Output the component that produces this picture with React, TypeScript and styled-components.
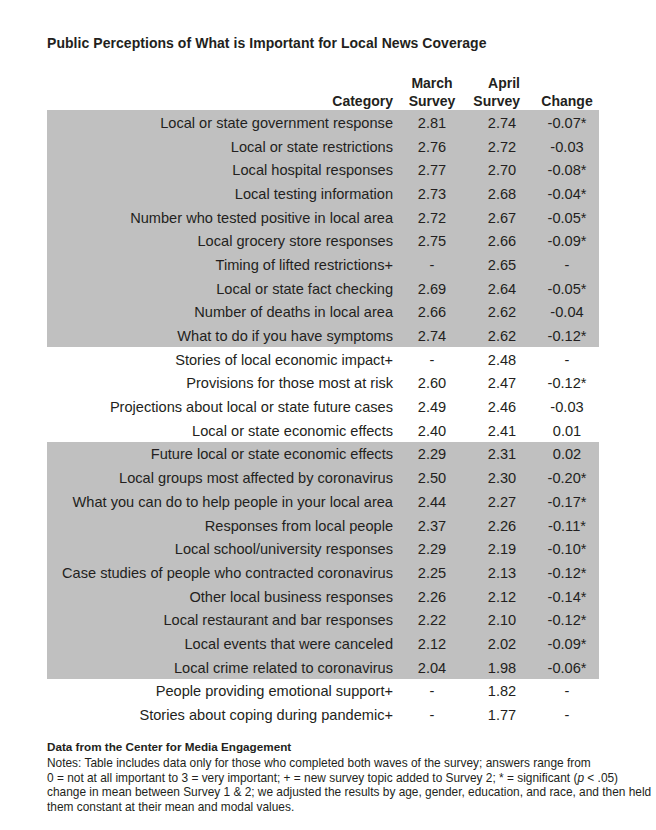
import React from 'react';
import styled, { createGlobalStyle } from 'styled-components';

type Row = {
  category: string;
  march: string;
  april: string;
  change: string;
  shaded: boolean;
};

const rows: Row[] = [
  { category: 'Local or state government response', march: '2.81', april: '2.74', change: '-0.07*', shaded: true },
  { category: 'Local or state restrictions', march: '2.76', april: '2.72', change: '-0.03', shaded: true },
  { category: 'Local hospital responses', march: '2.77', april: '2.70', change: '-0.08*', shaded: true },
  { category: 'Local testing information', march: '2.73', april: '2.68', change: '-0.04*', shaded: true },
  { category: 'Number who tested positive in local area', march: '2.72', april: '2.67', change: '-0.05*', shaded: true },
  { category: 'Local grocery store responses', march: '2.75', april: '2.66', change: '-0.09*', shaded: true },
  { category: 'Timing of lifted restrictions+', march: '-', april: '2.65', change: '-', shaded: true },
  { category: 'Local or state fact checking', march: '2.69', april: '2.64', change: '-0.05*', shaded: true },
  { category: 'Number of deaths in local area', march: '2.66', april: '2.62', change: '-0.04', shaded: true },
  { category: 'What to do if you have symptoms', march: '2.74', april: '2.62', change: '-0.12*', shaded: true },
  { category: 'Stories of local economic impact+', march: '-', april: '2.48', change: '-', shaded: false },
  { category: 'Provisions for those most at risk', march: '2.60', april: '2.47', change: '-0.12*', shaded: false },
  { category: 'Projections about local or state future cases', march: '2.49', april: '2.46', change: '-0.03', shaded: false },
  { category: 'Local or state economic effects', march: '2.40', april: '2.41', change: '0.01', shaded: false },
  { category: 'Future local or state economic effects', march: '2.29', april: '2.31', change: '0.02', shaded: true },
  { category: 'Local groups most affected by coronavirus', march: '2.50', april: '2.30', change: '-0.20*', shaded: true },
  { category: 'What you can do to help people in your local area', march: '2.44', april: '2.27', change: '-0.17*', shaded: true },
  { category: 'Responses from local people', march: '2.37', april: '2.26', change: '-0.11*', shaded: true },
  { category: 'Local school/university responses', march: '2.29', april: '2.19', change: '-0.10*', shaded: true },
  { category: 'Case studies of people who contracted coronavirus', march: '2.25', april: '2.13', change: '-0.12*', shaded: true },
  { category: 'Other local business responses', march: '2.26', april: '2.12', change: '-0.14*', shaded: true },
  { category: 'Local restaurant and bar responses', march: '2.22', april: '2.10', change: '-0.12*', shaded: true },
  { category: 'Local events that were canceled', march: '2.12', april: '2.02', change: '-0.09*', shaded: true },
  { category: 'Local crime related to coronavirus', march: '2.04', april: '1.98', change: '-0.06*', shaded: true },
  { category: 'People providing emotional support+', march: '-', april: '1.82', change: '-', shaded: false },
  { category: 'Stories about coping during pandemic+', march: '-', april: '1.77', change: '-', shaded: false },
];

export default function App() {
  return (
    <>
      <GlobalStyle />
      <Page>
        <Title>Public Perceptions of What is Important for Local News Coverage</Title>
        <Table>
          <HeaderRow>
            <HeadCell $align="category">Category</HeadCell>
            <HeadCell $align="center">
              March
              <br />
              Survey
            </HeadCell>
            <HeadCell $align="april">
              April
              <br />
              Survey
            </HeadCell>
            <HeadCell $align="center">Change</HeadCell>
          </HeaderRow>
          {rows.map((row) => (
            <DataRow key={row.category} $shaded={row.shaded}>
              <CategoryCell>{row.category}</CategoryCell>
              <ValueCell>{row.march}</ValueCell>
              <ValueCell>{row.april}</ValueCell>
              <ValueCell>{row.change}</ValueCell>
            </DataRow>
          ))}
        </Table>
        <Source>Data from the Center for Media Engagement</Source>
        <Notes>
          Notes: Table includes data only for those who completed both waves of the survey; answers range from
          <br />0 = not at all important to 3 = very important; + = new survey topic added to Survey 2; * = significant (
          <i>p</i> &lt; .05)
          <br />
          change in mean between Survey 1 &amp; 2; we adjusted the results by age, gender, education, and race, and then held
          <br />
          them constant at their mean and modal values.
        </Notes>
      </Page>
    </>
  );
}

const GlobalStyle = createGlobalStyle`
  body {
    margin: 0;
    background: #ffffff;
    color: #231f20;
    font-family: 'Liberation Sans', Arial, sans-serif;
  }
`;

const Page = styled.div`
  width: 656px;
  height: 830px;
  box-sizing: border-box;
  padding: 35px 0 0 47px;
`;

const Title = styled.h1`
  margin: 0;
  font-size: 14px;
  line-height: 16px;
  font-weight: bold;
  letter-spacing: 0.05px;
`;

const Table = styled.div`
  margin-top: 23px;
  width: 552px;
`;

const HeaderRow = styled.div`
  display: grid;
  grid-template-columns: 1fr 64px 76px 54px;
  padding-right: 5px;
  align-items: end;
`;

const HeadCell = styled.div<{ $align: 'category' | 'center' | 'april' }>`
  font-size: 14px;
  line-height: 18px;
  font-weight: bold;
  text-align: ${({ $align }) => ($align === 'center' ? 'center' : 'right')};
  padding-right: ${({ $align }) =>
    $align === 'category' ? '7px' : $align === 'april' ? '20px' : '0'};
`;

const DataRow = styled.div<{ $shaded: boolean }>`
  display: grid;
  grid-template-columns: 1fr 64px 76px 54px;
  padding-right: 5px;
  height: 23.7px;
  align-items: center;
  background: ${({ $shaded }) => ($shaded ? '#c0c0c0' : 'transparent')};
  font-size: 14.6px;
`;

const CategoryCell = styled.div`
  text-align: right;
  padding: 2px 7px 0 0;
  white-space: nowrap;
`;

const ValueCell = styled.div`
  text-align: center;
  padding-top: 2px;
  white-space: nowrap;
`;

const Source = styled.div`
  margin-top: 13px;
  font-size: 11.7px;
  line-height: 15px;
  font-weight: bold;
`;

const Notes = styled.div`
  margin-top: 2px;
  font-size: 11.9px;
  line-height: 14.7px;
  white-space: nowrap;
`;
